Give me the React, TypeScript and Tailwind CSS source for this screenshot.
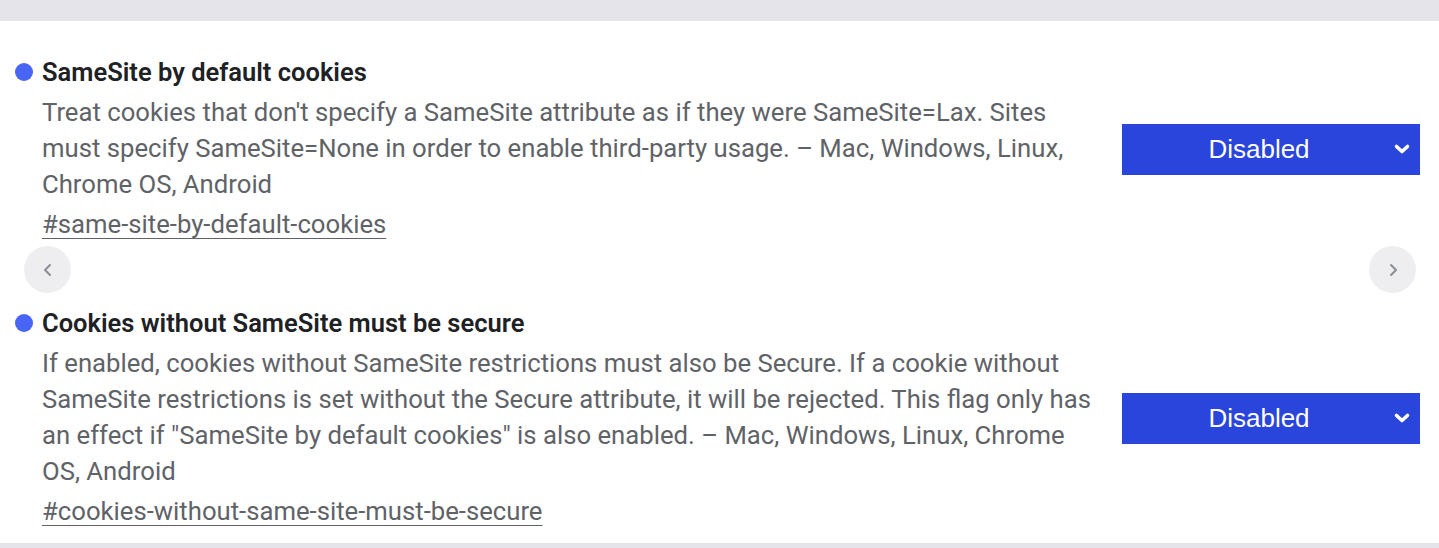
import React from "react";

function Chevron() {
  return (
    <svg width="18" height="12" viewBox="0 0 18 12" className="absolute right-[9px] top-1/2 -translate-y-1/2">
      <path d="M3.5 3.5 L9 8.5 L14.5 3.5" fill="none" stroke="white" strokeWidth="3.6" strokeLinecap="round" strokeLinejoin="round" />
    </svg>
  );
}

function Select() {
  return (
    <div className="relative w-[298px] h-[51px] bg-[#2945dc] flex items-center justify-center pr-[24px]">
      <span className="text-white text-[26px] leading-none" style={{ fontFamily: '"Liberation Sans", Arial, sans-serif' }}>
        Disabled
      </span>
      <Chevron />
    </div>
  );
}

function Flag({ title, desc, link }: { title: string; desc: string; link: string }) {
  return (
    <div className="flex items-center pl-[15px] pr-[19px]">
      <div className="w-[1090px] shrink-0">
        <div className="flex items-center gap-[9px]">
          <span className="w-[18px] h-[18px] rounded-full bg-[#4865f5] shrink-0" />
          <h2 className="text-[25.5px] leading-[32px] font-semibold text-[#202124]">{title}</h2>
        </div>
        <div className="pl-[27px]">
          <p className="mt-[6px] text-[25.7px] leading-[36px] text-[#5f6368]">{desc}</p>
          <a className="block mt-[4px] text-[25.7px] leading-[36px] text-[#5f6368] underline underline-offset-[5px] decoration-[1px]">
            {link}
          </a>
        </div>
      </div>
      <div className="ml-auto">
        <Select />
      </div>
    </div>
  );
}

function Round({ dir }: { dir: "l" | "r" }) {
  return (
    <div className="w-[47px] h-[47px] rounded-full bg-[#eeeef1] flex items-center justify-center">
      <svg width="12" height="14" viewBox="0 0 12 14">
        <path
          d={dir === "l" ? "M8 2 L3 7 L8 12" : "M4 2 L9 7 L4 12"}
          fill="none"
          stroke="#8b8e94"
          strokeWidth="2"
          strokeLinecap="round"
          strokeLinejoin="round"
        />
      </svg>
    </div>
  );
}

export default function App() {
  return (
    <div className="w-[1439px] h-[548px] bg-white flex flex-col overflow-hidden" style={{ fontFamily: 'Roboto, "Noto Sans", sans-serif' }}>
      <div className="h-[21px] bg-[#e4e4ea] shrink-0" />
      <div className="flex-1 pt-[35px]">
        <Flag
          title="SameSite by default cookies"
          desc="Treat cookies that don't specify a SameSite attribute as if they were SameSite=Lax. Sites must specify SameSite=None in order to enable third-party usage. – Mac, Windows, Linux, Chrome OS, Android"
          link="#same-site-by-default-cookies"
        />
        <div className="flex justify-between pl-[24px] pr-[23px] mt-[4px] mb-[14px]">
          <Round dir="l" />
          <Round dir="r" />
        </div>
        <Flag
          title="Cookies without SameSite must be secure"
          desc={'If enabled, cookies without SameSite restrictions must also be Secure. If a cookie without SameSite restrictions is set without the Secure attribute, it will be rejected. This flag only has an effect if "SameSite by default cookies" is also enabled. – Mac, Windows, Linux, Chrome OS, Android'}
          link="#cookies-without-same-site-must-be-secure"
        />
      </div>
      <div className="h-[5px] bg-[#e4e4ea] shrink-0" />
    </div>
  );
}
